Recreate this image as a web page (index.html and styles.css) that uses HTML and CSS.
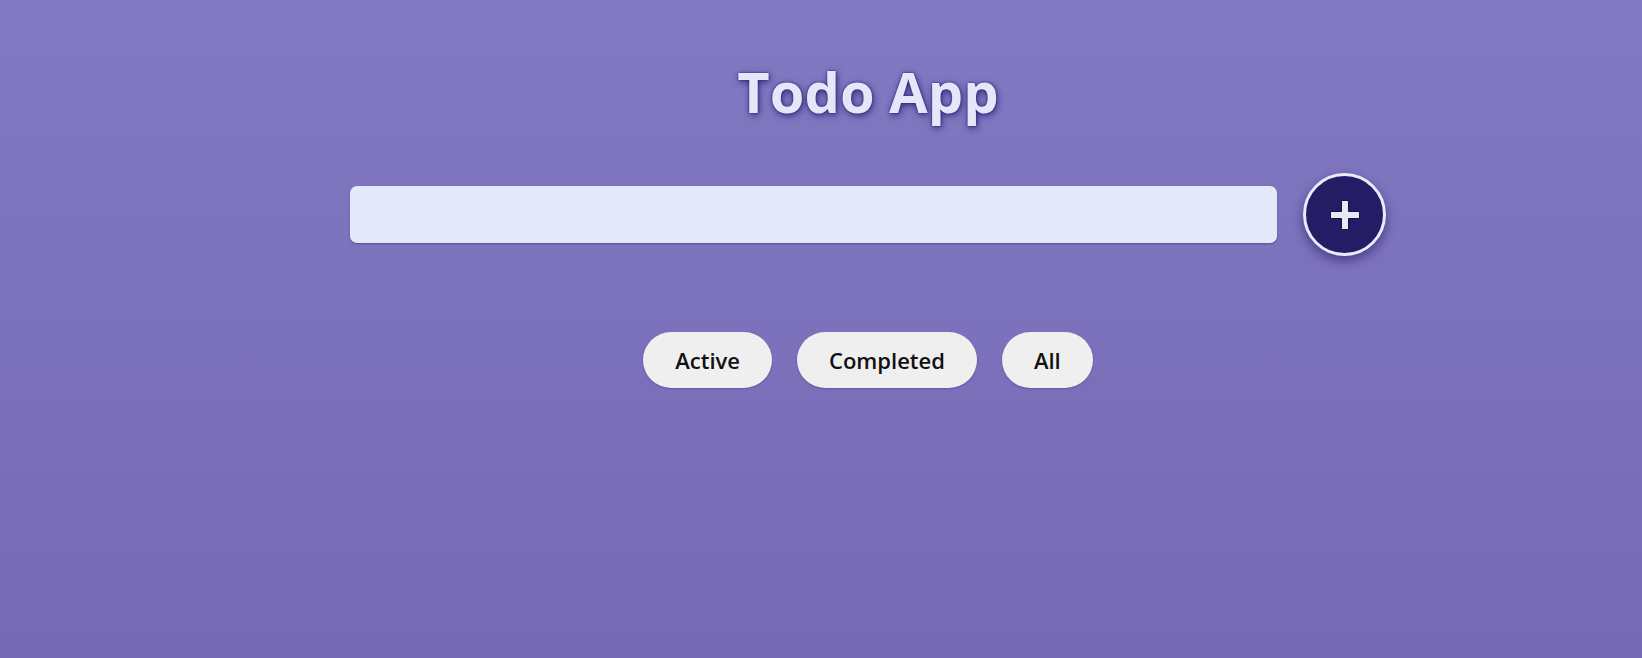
FILE: index.html
```html
<!DOCTYPE html>
<html lang="en">
<head>
<meta charset="utf-8">
<title>Todo App</title>
<link rel="stylesheet" href="styles.css">
</head>
<body>
<main class="app">
  <h1 class="title">Todo App</h1>
  <form class="add-row">
    <input class="todo-input" type="text" aria-label="New todo">
    <button class="add-btn" type="button" aria-label="Add todo">
      <svg viewBox="0 0 32 32" width="32" height="32" aria-hidden="true">
        <path d="M12.5 1.5h7v11h11v7h-11v11h-7v-11h-11v-7h11z" fill="#e6e8f8" stroke="#14123a" stroke-width="1" stroke-linejoin="round"/>
      </svg>
    </button>
  </form>
  <div class="filters">
    <button class="filter" type="button">Active</button>
    <button class="filter" type="button">Completed</button>
    <button class="filter" type="button">All</button>
  </div>
</main>
</body>
</html>
```
FILE: styles.css
```css
* { box-sizing: border-box; }
html, body { margin: 0; height: 100%; }
body {
  background: linear-gradient(to bottom, #8279c3 0%, #7669b4 100%);
  font-family: "Open Sans", "Liberation Sans", sans-serif;
  min-height: 100vh;
}
.app {
  display: flex;
  flex-direction: column;
  align-items: center;
  padding: 58px 0 0 94px;
}
.title {
  margin: 0;
  font-size: 56px;
  line-height: 67px;
  font-weight: 700;
  color: #e4e7f9;
  text-shadow: 0 0 2px #1f1766, 1px 2px 7px rgba(35, 26, 110, 0.85);
}
.add-row {
  display: flex;
  align-items: center;
  gap: 26px;
  margin: 48px 0 0;
}
.todo-input {
  width: 927px;
  height: 57px;
  border: none;
  border-radius: 7px;
  background: #e3e9f8;
  box-shadow: 0 1px 2px rgba(40, 30, 110, 0.45);
  outline: none;
  font: inherit;
  font-size: 20px;
  padding: 0 16px;
}
.add-btn {
  width: 83px;
  height: 83px;
  border-radius: 50%;
  border: 3px solid #ebeafa;
  background: #241c64;
  display: flex;
  align-items: center;
  justify-content: center;
  padding: 0;
  box-shadow: 0 5px 12px rgba(30, 20, 90, 0.55);
  cursor: pointer;
}
.add-btn svg { display: block; }
.filters {
  display: flex;
  gap: 25px;
  margin-top: 76px;
}
.filter {
  height: 56px;
  padding: 0 32px;
  border: none;
  border-radius: 28px;
  background: #efefef;
  color: #111;
  font-family: "Open Sans", "Liberation Sans", sans-serif;
  font-size: 22px;
  font-weight: 600;
  box-shadow: 0 1px 2px rgba(40, 30, 110, 0.3);
  cursor: pointer;
}
```
